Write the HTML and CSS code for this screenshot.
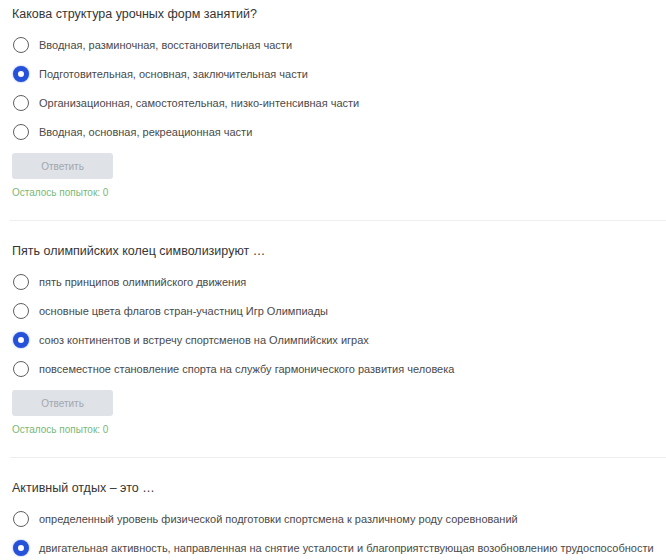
FILE: index.html
```html
<!DOCTYPE html>
<html lang="ru">
<head>
<meta charset="utf-8">
<link rel="stylesheet" href="styles.css">
</head>
<body>
<div class="quiz">
  <section class="question first">
    <div class="title">Какова структура урочных форм занятий?</div>
    <ul class="options">
      <li class="option"><span class="radio"></span><span>Вводная, разминочная, восстановительная части</span></li>
      <li class="option"><span class="radio checked"></span><span>Подготовительная, основная, заключительная части</span></li>
      <li class="option"><span class="radio"></span><span>Организационная, самостоятельная, низко-интенсивная части</span></li>
      <li class="option"><span class="radio"></span><span>Вводная, основная, рекреационная части</span></li>
    </ul>
    <button class="answer" disabled>Ответить</button>
    <div class="attempts">Осталось попыток: 0</div>
  </section>
  <section class="question">
    <div class="title">Пять олимпийских колец символизируют …</div>
    <ul class="options">
      <li class="option"><span class="radio"></span><span>пять принципов олимпийского движения</span></li>
      <li class="option"><span class="radio"></span><span>основные цвета флагов стран-участниц Игр Олимпиады</span></li>
      <li class="option"><span class="radio checked"></span><span>союз континентов и встречу спортсменов на Олимпийских играх</span></li>
      <li class="option"><span class="radio"></span><span>повсеместное становление спорта на службу гармонического развития человека</span></li>
    </ul>
    <button class="answer" disabled>Ответить</button>
    <div class="attempts">Осталось попыток: 0</div>
  </section>
  <section class="question">
    <div class="title">Активный отдых – это …</div>
    <ul class="options">
      <li class="option"><span class="radio"></span><span>определенный уровень физической подготовки спортсмена к различному роду соревнований</span></li>
      <li class="option"><span class="radio checked"></span><span>двигательная активность, направленная на снятие усталости и благоприятствующая возобновлению трудоспособности</span></li>
    </ul>
  </section>
</div>
</body>
</html>
```
FILE: styles.css
```css
html, body {
  margin: 0;
  padding: 0;
  background: #ffffff;
}
body {
  font-family: "Liberation Sans", Arial, sans-serif;
  color: #3a3a3a;
  overflow: hidden;
}
.quiz {
  padding-left: 12px;
}
.question {
  padding-top: 20px;
  padding-bottom: 20px;
  border-bottom: 1px solid #eeeeee;
  margin-left: -2px;
  padding-left: 2px;
}
.question.first {
  padding-top: 4px;
}
.title {
  font-size: 12.5px;
  line-height: 20px;
  color: #353535;
}
.options {
  list-style: none;
  margin: 6px 0 0 0;
  padding: 0;
}
.option {
  display: flex;
  align-items: center;
  gap: 10px;
  height: 29px;
  font-size: 11px;
  color: #4a4a4a;
  white-space: nowrap;
}
.radio {
  box-sizing: border-box;
  flex: none;
  width: 16px;
  height: 16px;
  border-radius: 50%;
  border: 1.5px solid #5f5f5f;
  margin-left: 1px;
  background: #fff;
}
.radio.checked {
  border: 5px solid #2552d8;
  box-shadow: 0 0 2px rgba(37, 82, 216, 0.6);
}
.answer {
  display: block;
  margin-top: 7px;
  width: 101px;
  height: 26px;
  border: none;
  border-radius: 3px;
  background: #dfe2e7;
  color: #a3a7ad;
  font-family: "Liberation Sans", Arial, sans-serif;
  font-size: 10px;
  padding: 0;
}
.attempts {
  margin-top: 7px;
  font-size: 10px;
  line-height: 14px;
  color: #78b878;
}
```
